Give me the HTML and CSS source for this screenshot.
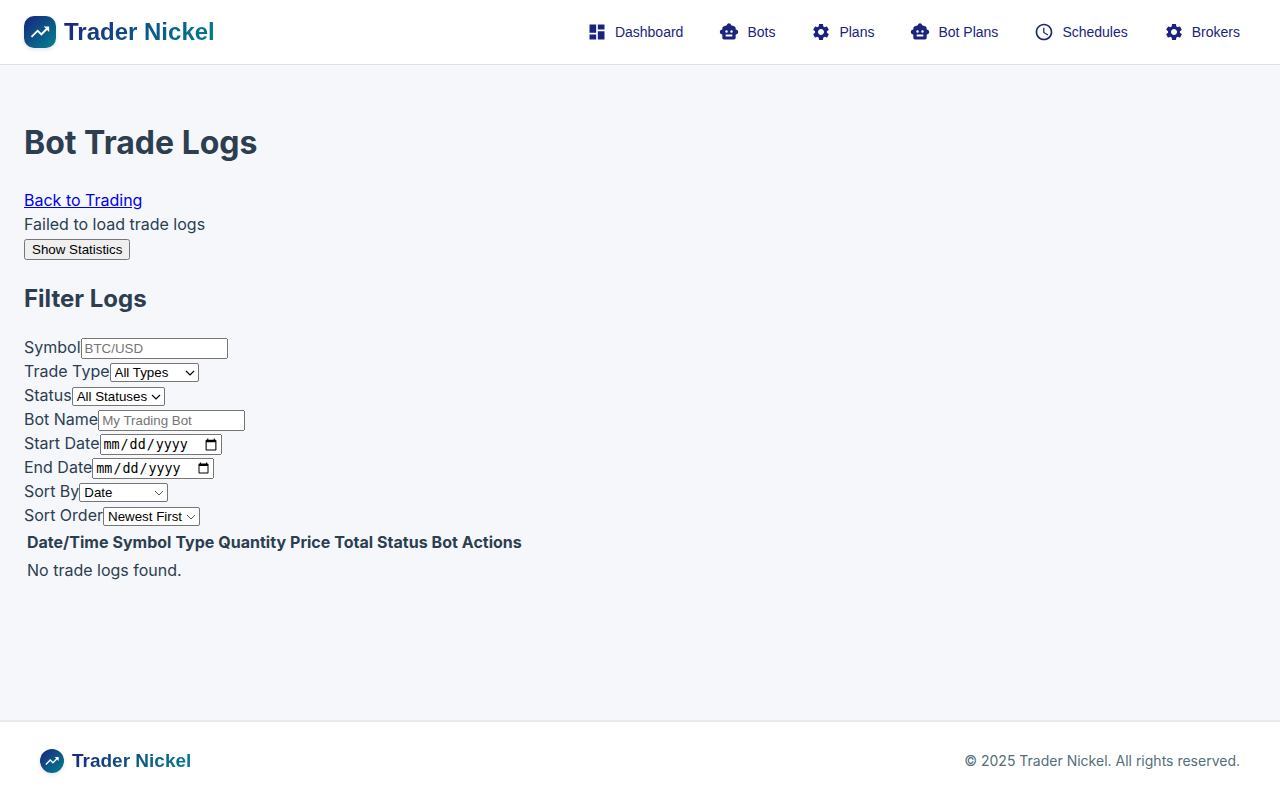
FILE: index.html
```html
<!DOCTYPE html>
<html lang="en">
<head>
<meta charset="utf-8">
<title>Bot Trade Logs - Trader Nickel</title>
<link rel="stylesheet" href="styles.css">
</head>
<body>
<svg class="sprite" aria-hidden="true">
  <defs>
    <symbol id="trend" viewBox="0 0 24 24"><path d="m16 6 2.290 2.290-4.880 4.880-4-4L2 16.590 3.410 18l6-6 4 4 6.300-6.290L22 12V6z"/></symbol>
    <symbol id="dashboard" viewBox="0 0 24 24"><path d="M3 13h8V3H3v10zm0 8h8v-6H3v6zm10 0h8V11h-8v10zm0-18v6h8V3h-8z"/></symbol>
    <symbol id="bot" viewBox="0 0 24 24"><path fill-rule="evenodd" d="M12 1.500c1.400 0 2.200 1 2.600 2.500L18 5c1.200.4 2 1.200 2 2.500V9c1.800.2 3 1.400 3 3s-1.200 2.800-3 3v4c0 1.200-.8 2-2 2H6c-1.200 0-2-.8-2-2v-4c-1.800-.2-3-1.400-3-3s1.200-2.800 3-3V7.500C4 6.200 4.800 5.400 6 5l3.400-1C9.800 2.500 10.600 1.500 12 1.500zM9 10a1.500 1.500 0 1 0 0 3 1.500 1.500 0 0 0 0-3zm6 0a1.500 1.500 0 1 0 0 3 1.500 1.500 0 0 0 0-3zm-7 5v2.300h8V15z"/></symbol>
    <symbol id="gear" viewBox="0 0 24 24"><path d="M19.140 12.940c.04-.3.060-.61.060-.94 0-.32-.020-.64-.070-.94l2.030-1.580c.18-.14.23-.41.120-.61l-1.920-3.320c-.12-.22-.37-.29-.59-.22l-2.390.96c-.5-.38-1.030-.7-1.620-.94l-.36-2.540c-.040-.24-.24-.41-.48-.41h-3.840c-.24 0-.43.17-.47.41l-.36 2.540c-.59.24-1.130.57-1.620.94l-2.390-.96c-.22-.080-.47 0-.59.22L2.740 8.870c-.12.21-.080.47.120.61l2.030 1.580c-.050.3-.090.63-.090.94s.020.64.070.94l-2.030 1.580c-.18.14-.23.41-.12.61l1.920 3.320c.12.22.37.29.59.22l2.390-.96c.5.38 1.030.7 1.620.94l.36 2.540c.050.24.24.41.48.41h3.840c.24 0 .44-.17.47-.41l.36-2.540c.59-.24 1.130-.56 1.620-.94l2.390.96c.22.080.47 0 .59-.22l1.920-3.320c.12-.22.070-.47-.12-.61l-2.010-1.580zM12 15.600c-1.980 0-3.600-1.620-3.600-3.600s1.620-3.600 3.600-3.600 3.600 1.620 3.600 3.600-1.620 3.600-3.600 3.600z"/></symbol>
    <symbol id="clock" viewBox="0 0 24 24"><path d="M11.990 2C6.470 2 2 6.480 2 12s4.470 10 9.990 10C17.520 22 22 17.520 22 12S17.520 2 11.990 2zM12 20c-4.420 0-8-3.580-8-8s3.580-8 8-8 8 3.580 8 8-3.580 8-8 8zm.5-13H11v6l5.250 3.150.75-1.230-4.500-2.670z"/></symbol>
  </defs>
</svg>
<header class="site-header">
  <a class="brand" href="#"><span class="brand-mark"><svg><use href="#trend"/></svg></span><span class="brand-name">Trader Nickel</span></a>
  <nav class="nav" aria-label="Main">
    <a class="nav-link" href="#"><svg><use href="#dashboard"/></svg>Dashboard</a>
    <a class="nav-link" href="#"><svg><use href="#bot"/></svg>Bots</a>
    <a class="nav-link" href="#"><svg><use href="#gear"/></svg>Plans</a>
    <a class="nav-link" href="#"><svg><use href="#bot"/></svg>Bot Plans</a>
    <a class="nav-link" href="#"><svg><use href="#clock"/></svg>Schedules</a>
    <a class="nav-link" href="#"><svg><use href="#gear"/></svg>Brokers</a>
  </nav>
</header>
<main class="content">
  <h1>Bot Trade Logs</h1>
  <div><a href="#back">Back to Trading</a></div>
  <div>Failed to load trade logs</div>
  <div><button type="button">Show Statistics</button></div>
  <h2>Filter Logs</h2>
  <form>
    <div class="field"><label for="symbol">Symbol</label><input id="symbol" type="text" placeholder="BTC/USD"></div>
    <div class="field"><label for="type">Trade Type</label><select id="type" class="wide"><option>All Types</option><option>Buy</option><option>Sell</option></select></div>
    <div class="field"><label for="status">Status</label><select id="status"><option>All Statuses</option></select></div>
    <div class="field"><label for="bot-name">Bot Name</label><input id="bot-name" type="text" placeholder="My Trading Bot"></div>
    <div class="field"><label for="start">Start Date</label><input id="start" type="date"></div>
    <div class="field"><label for="end">End Date</label><input id="end" type="date"></div>
    <div class="field"><label for="sort">Sort By</label><select id="sort" class="wide light"><option>Date</option><option>Symbol</option></select></div>
    <div class="field"><label for="order">Sort Order</label><select id="order" class="light"><option>Newest First</option></select></div>
  </form>
  <table>
    <thead><tr><th>Date/Time</th><th>Symbol</th><th>Type</th><th>Quantity</th><th>Price</th><th>Total</th><th>Status</th><th>Bot</th><th>Actions</th></tr></thead>
    <tbody><tr><td colspan="9">No trade logs found.</td></tr></tbody>
  </table>
</main>
<footer class="site-footer">
  <a class="brand brand-small" href="#"><span class="brand-mark"><svg><use href="#trend"/></svg></span><span class="brand-name">Trader Nickel</span></a>
  <p class="copyright">© 2025 Trader Nickel. All rights reserved.</p>
</footer>
</body>
</html>
```
FILE: styles.css
```css
* { box-sizing: border-box; }
body {
  margin: 0;
  min-height: 100vh;
  display: flex;
  flex-direction: column;
  background: #f5f7fb;
  color: #2c3e50;
  font: 16px/24px Inter, sans-serif;
}
.sprite { position: absolute; width: 0; height: 0; }
svg { fill: currentColor; }
.site-header {
  display: flex;
  align-items: center;
  justify-content: space-between;
  padding: 14px 24px;
  background: #fff;
  border-bottom: 1px solid #e0e0e0;
}
.brand { display: flex; align-items: center; gap: 8px; text-decoration: none; }
.brand-mark {
  display: flex;
  align-items: center;
  justify-content: center;
  width: 32px;
  height: 32px;
  border-radius: 10px;
  background: linear-gradient(135deg, #1a237e, #00838f);
  color: #fff;
  box-shadow: 0 2px 4px rgb(0 0 0 / 10%);
}
.brand-mark svg { width: 22px; height: 22px; }
.brand-name {
  font: 700 24px/32px "Liberation Sans", Arial, sans-serif;
  background: linear-gradient(135deg, #1a237e, #00838f);
  background-clip: text;
  color: transparent;
}
.nav { display: flex; gap: 4px; }
.nav-link {
  display: flex;
  align-items: center;
  gap: 8px;
  padding: 8px 16px;
  color: #1a237e;
  font: 14px/20px "Liberation Sans", Arial, sans-serif;
  text-decoration: none;
}
.nav-link svg { width: 20px; height: 20px; }
.content { flex: 1; padding: 32px 24px; }
h1 { margin: 22px 0 21px; font-size: 32px; line-height: 48px; }
h2 { margin: 21px 0 18px; font-size: 24px; line-height: 36px; }
input { width: 147px; }
input[type="date"] { width: 122px; }
select {
  width: 93px;
  height: 19px;
  padding: 0 4px;
  appearance: none;
  border: 1px solid #767676;
  border-radius: 2px;
  color: #000;
  background: #fff url("data:image/svg+xml,%3Csvg xmlns='http://www.w3.org/2000/svg' width='10' height='6'%3E%3Cpath d='M1 1l4 4 4-4' fill='none' stroke='%23000' stroke-width='1.200'/%3E%3C/svg%3E") no-repeat right 3px center;
}
.wide { width: 89px; }
#order { width: 97px; }
.light { background-image: url("data:image/svg+xml,%3Csvg xmlns='http://www.w3.org/2000/svg' width='10' height='6'%3E%3Cpath d='M1 1l4 4 4-4' fill='none' stroke='%23555'/%3E%3C/svg%3E"); }
.site-footer {
  display: flex;
  align-items: center;
  justify-content: space-between;
  padding: 25px 40px 26px;
  background: #fff;
  border-top: 2px solid #e9ebef;
}
.brand-small .brand-mark { width: 24px; height: 24px; border-radius: 50%; }
.brand-small .brand-mark svg { width: 16px; height: 16px; }
.brand-small .brand-name { font-size: 19px; line-height: 27px; }
.copyright { margin: 0; color: #546e7a; font-size: 14px; line-height: 20px; }
```
